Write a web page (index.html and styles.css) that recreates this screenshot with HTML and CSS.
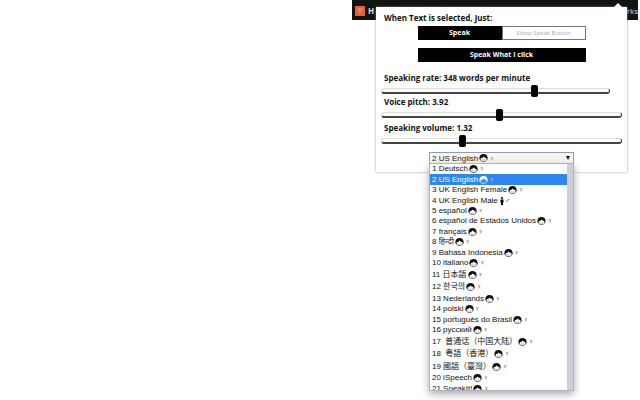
FILE: index.html
```html
<!DOCTYPE html>
<html lang="en">

<head>
    <meta charset="UTF-8">
    <meta name="viewport" content="width=device-width, initial-scale=1.0">
    <title>Speech settings</title>
    <link rel="stylesheet" href="styles.css">
</head>

<body>
    <svg class="defs" width="0" height="0">
        <symbol id="girl" viewBox="0 0 18 16">
            <path d="M9 0C4 0 1 3 1 7c0 1 0 2-1 3l2 1c1 3 4 5 7 5s6-2 7-5l2-1c-1-1-1-2-1-3 0-4-3-7-8-7z" fill="#111"/>
            <path d="M3 9c3-1 5-2 6-4 2 2 4 3 6 3 1 4-2 7-6 7-3 0-6-2-6-6z" fill="#fff"/>
            <circle cx="7" cy="10" r=".7"/>
            <circle cx="12" cy="10" r=".7"/>
            <path d="M7 12q2 2 4 0" fill="none" stroke="#777"/>
        </symbol>
        <symbol id="girl-light" viewBox="0 0 18 16">
            <path d="M9 0C4 0 1 3 1 7c0 1 0 2-1 3l2 1c1 3 4 5 7 5s6-2 7-5l2-1c-1-1-1-2-1-3 0-4-3-7-8-7z" fill="#fff"/>
            <path d="M3 9c3-1 5-2 6-4 2 2 4 3 6 3 1 4-2 7-6 7-3 0-6-2-6-6z" fill="#2f86ee"/>
            <path d="M7 12q2 2 4 0" fill="none" stroke="#fff"/>
        </symbol>
        <symbol id="man" viewBox="0 0 8 16">
            <circle cx="4" cy="2" r="2"/>
            <path d="M1 5h6v6H6v5H2v-5H1z"/>
        </symbol>
    </svg>

    <div class="browser">
        <div class="toolbar">
            <span class="logo">Y</span>
            <span class="site">H</span>
            <span class="bookmarks">rks</span>
        </div>

        <main class="popup">
            <h1>When Text is selected, Just:</h1>
            <div class="switch">
                <button class="on">Speak</button>
                <button>Show Speak Button</button>
            </div>
            <button class="click">Speak What I click</button>

            <label for="rate">Speaking rate: 348 words per minute</label>
            <input class="short" type="range" id="rate" min="80" max="475" value="348">

            <label for="pitch">Voice pitch: 3.92</label>
            <input type="range" id="pitch" min="0" max="8" step="0.01" value="3.92">

            <label class="spaced" for="volume">Speaking volume: 1.32</label>
            <input type="range" id="volume" min="0" max="4" step="0.01" value="1.32">

            <div class="voice">
                <select id="voice" aria-label="Voice">
                    <option>2 US English</option>
                </select>
                <span class="picked"><svg class="face"><use href="#girl"/></svg><small>♀</small></span>
                <div class="menu">
                    <ul id="voices"></ul>
                    <div class="scrollbar"></div>
                </div>
            </div>
        </main>
    </div>

    <script>
        var voices = ["Deutsch", "US English", "UK English Female", "UK English Male", "español",
            "español de Estados Unidos", "français", "हिन्दी", "Bahasa Indonesia", "italiano",
            "日本語", "한국의", "Nederlands", "polski", "português do Brasil", "русский",
            " 普通话（中国大陆）", " 粤語（香港）", "國語（臺灣）", "iSpeech", "SpeakIt!"];
        var tall = [11, 12, 17, 18, 19];
        var list = document.getElementById("voices");

        voices.forEach(function (name, i) {
            var number = i + 1;
            var male = number === 4;
            var face = number === 2 ? "girl-light" : "girl";
            var item = document.createElement("li");
            if (tall.includes(number)) item.className = "tall";
            if (number === 2) item.className = "selected";
            item.innerHTML = "<span>" + number + " " + name + "</span>" +
                (male ? '<svg class="man"><use href="#man"/></svg><small>♂</small>'
                    : '<svg class="face"><use href="#' + face + '"/></svg><small>♀</small>');
            list.appendChild(item);
        });
    </script>
</body>

</html>
```

FILE: styles.css
```css
body {
    min-height: 100vh;
    margin: 0;
    background-color: #fff;
    font-family: "Open Sans", sans-serif;
    font-size: 8px;
    color: #111;
}

.defs {
    position: absolute;
}

.browser {
    width: 286px;
    margin-left: auto;
    margin-right: 2px;
}

.toolbar {
    display: flex;
    align-items: center;
    box-sizing: border-box;
    height: 20px;
    padding: 1px 0 0 3px;
    background-color: #111411;
    color: #ddd;
}

.logo {
    width: 10px;
    background-color: #e8603c;
    color: #f6c9b4;
    font-size: 7px;
    line-height: 10px;
    text-align: center;
}

.site {
    margin-left: 3px;
    font-weight: bold;
}

.bookmarks {
    margin-left: auto;
}

.popup {
    position: relative;
    box-sizing: border-box;
    height: 165px;
    margin: -13px 11px 0 24px;
    padding: 6px 5px 0;
    background-color: #fff;
    box-shadow: 0 0 2px #888;
}

.popup::before {
    content: "";
    position: absolute;
    top: -4px;
    right: 5px;
    border: 4px solid transparent;
    border-top: 0;
    border-bottom-color: #fff;
}

h1,
label {
    display: block;
    margin: 0 0 0 3px;
    font-size: 8px;
    font-weight: bold;
    line-height: 10px;
}

button {
    height: 14px;
    padding: 0;
    border: 1px solid #000;
    background-color: #000;
    color: #fff;
    font: bold 7px/12px "Open Sans", sans-serif;
}

.switch {
    display: flex;
    width: 168px;
    margin: 3px auto 8px;
}

.switch button {
    flex: 1;
    border-color: #777;
    background-color: #fff;
    color: #aaa;
    font-size: 6px;
    font-weight: normal;
}

.switch .on {
    border-color: #000;
    background-color: #000;
    color: #fff;
    font-size: 7px;
    font-weight: bold;
}

.click {
    display: block;
    width: 168px;
    margin: 0 auto 11px;
}

input {
    display: block;
    width: 100%;
    height: 12px;
    margin: 2px 0 0;
    appearance: none;
    background: transparent;
}

.short {
    width: 95%;
}

.spaced {
    margin-top: 2px;
}

input::-webkit-slider-runnable-track {
    height: 6px;
    border: 1px solid #ddd;
    border-right-color: #333;
    border-bottom: 2px solid #444;
    border-radius: 3px;
    box-sizing: border-box;
    background-color: #fff;
}

input::-webkit-slider-thumb {
    appearance: none;
    width: 7px;
    height: 12px;
    margin-top: -4px;
    border-radius: 2px;
    background-color: #000;
}

.voice {
    position: relative;
    width: 145px;
    margin: 5px 0 0 48px;
    font-family: "Liberation Sans", "Noto Sans", "Noto Sans CJK SC", sans-serif;
}

select {
    display: block;
    width: 100%;
    height: 12px;
    padding: 0 2px;
    box-sizing: border-box;
    appearance: none;
    border: 1px solid #8d9cb8;
    border-radius: 0;
    background-color: #f6f8f0;
    color: #111;
    font: inherit;
}

.voice::after {
    content: "";
    position: absolute;
    top: 4px;
    right: 4px;
    border: 2px solid transparent;
    border-top: 4px solid #111;
    border-bottom: 0;
}

.picked {
    position: absolute;
    top: 1px;
    left: 49px;
    display: flex;
    align-items: center;
    height: 10px;
}

.menu {
    position: absolute;
    top: 11px;
    left: 0;
    right: 0;
    display: flex;
    box-sizing: border-box;
    height: 228px;
    overflow: hidden;
    border: 1px solid #a9b4c8;
    background-color: #fff;
    box-shadow: 0 3px 8px #aaa;
}

ul {
    display: flex;
    flex: 1;
    flex-direction: column;
    height: 230px;
    margin: 0;
    padding: 0;
    list-style: none;
}

li {
    display: flex;
    flex: 5 1 0;
    align-items: center;
    min-height: 0;
    padding-left: 2px;
    line-height: 10px;
    white-space: pre;
}

.tall {
    flex-grow: 6;
}

.selected {
    background-color: #2f86ee;
    color: #fff;
}

.face {
    width: 9px;
    height: 8px;
    margin-left: 1px;
}

.man {
    width: 4px;
    height: 8px;
    margin-left: 2px;
}

small {
    margin-left: 1px;
    color: #444;
    font-size: 7px;
}

.selected small {
    color: #cde;
}

.scrollbar {
    width: 6px;
    background-color: #ccd0d8;
}
```
